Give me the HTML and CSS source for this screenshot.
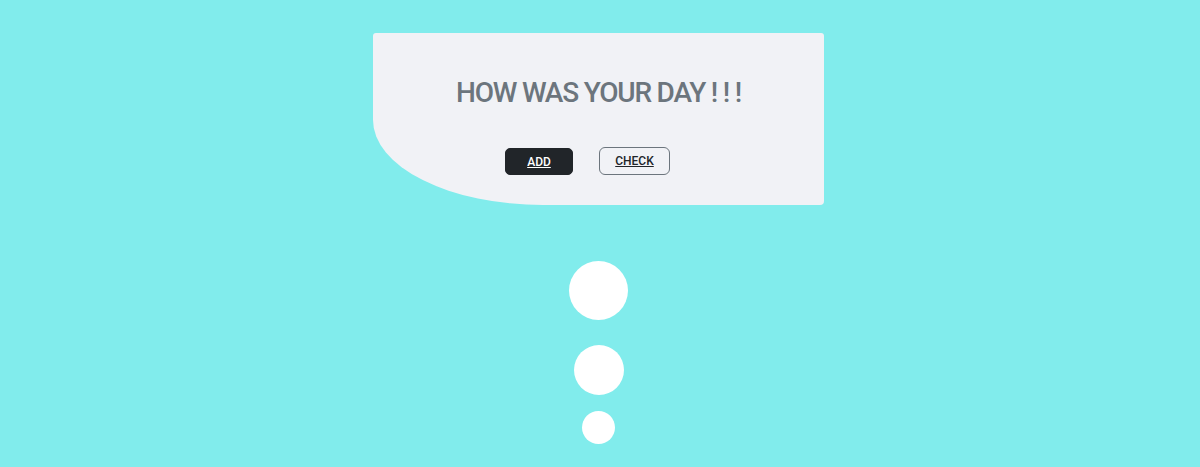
FILE: index.html
```html
<!DOCTYPE html>
<html>
<head>
<meta charset="utf-8">
<link rel="stylesheet" href="styles.css">
</head>
<body>
<main class="page">
  <section class="card">
    <h1 class="title">HOW WAS YOUR DAY ! ! !</h1>
    <div class="actions">
      <a class="btn btn-dark" href="#">ADD</a>
      <a class="btn btn-outline" href="#">CHECK</a>
    </div>
  </section>
  <div class="dots">
    <span class="dot dot-lg"></span>
    <span class="dot dot-md"></span>
    <span class="dot dot-sm"></span>
  </div>
</main>
</body>
</html>
```
FILE: styles.css
```css
html, body {
  margin: 0;
  padding: 0;
  height: 100%;
}
body {
  background: #81ecec;
  font-family: Roboto, "Liberation Sans", sans-serif;
  overflow: hidden;
}
.page {
  display: flex;
  flex-direction: column;
  align-items: center;
  padding-top: 33px;
}
.card {
  box-sizing: border-box;
  width: 451px;
  height: 172px;
  margin-left: -3px;
  background: #f1f2f6;
  border-radius: 3px 3px 4px 170px / 3px 3px 4px 85px;
  padding-top: 43px;
}
.title {
  margin: 0;
  font-size: 28px;
  line-height: 34px;
  font-weight: 500;
  color: #6c757d;
  text-align: center;
  letter-spacing: -1.2px;
}
.actions {
  display: flex;
  gap: 26px;
  padding-left: 132px;
  margin-top: 38px;
}
.btn {
  box-sizing: border-box;
  height: 28px;
  display: flex;
  align-items: center;
  justify-content: center;
  font-size: 12px;
  font-weight: 500;
  text-decoration: underline;
  border-radius: 5px;
}
.btn-dark {
  width: 68px;
  height: 27px;
  background: #212529;
  color: #ffffff;
  border: 1px solid #212529;
}
.btn-outline {
  width: 71px;
  margin-top: -1px;
  background: transparent;
  color: #212529;
  border: 1px solid #6c757d;
  border-radius: 6px;
}
.dots {
  display: flex;
  flex-direction: column;
  align-items: center;
  margin-top: 56px;
  margin-left: -3px;
}
.dot {
  display: block;
  border-radius: 50%;
  background: #ffffff;
}
.dot-lg {
  width: 59px;
  height: 59px;
}
.dot-md {
  width: 50px;
  height: 50px;
  margin-top: 25px;
}
.dot-sm {
  width: 33px;
  height: 33px;
  margin-top: 16px;
}
```
